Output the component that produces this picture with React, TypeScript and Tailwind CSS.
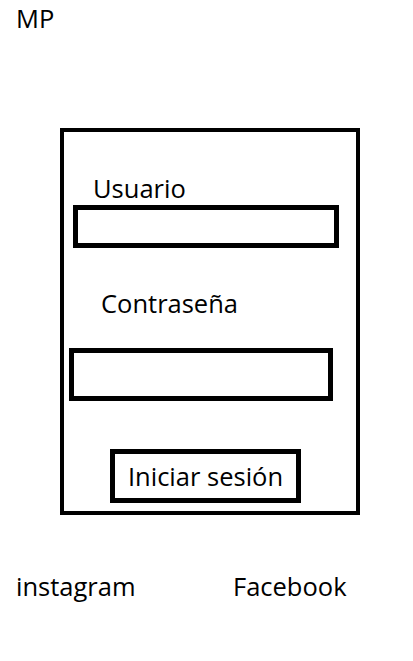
import React from 'react'

const App = () => {
    return (
        <div className="w-[413px] h-[661px] bg-white text-black text-[25.5px] leading-[32px]" style={{ fontFamily: '"Open Sans", "Noto Sans", sans-serif' }}>
            <div className="pt-[2px] pl-[16px]">MP</div>

            <div className="mt-[94px] ml-[60px] w-[300px] h-[387px] border-[4px] border-black flex flex-col">
                <label className="mt-[40px] ml-[29px]">Usuario</label>
                <input type="text" className="mt-[1px] ml-[9px] w-[266px] h-[43px] border-[5px] border-black outline-none" />

                <label className="mt-[39px] ml-[37px]">Contraseña</label>
                <input type="password" className="mt-[29px] ml-[5px] w-[264px] h-[53px] border-[5px] border-black outline-none" />

                <button className="mt-[48px] ml-[46px] w-[191px] h-[54px] border-[5px] border-black flex items-center justify-center">
                    Iniciar sesión
                </button>
            </div>

            <div className="mt-[55px] pl-[16px] flex">
                <a className="w-[217px]">instagram</a>
                <a>Facebook</a>
            </div>
        </div>
    )
}

export default App
